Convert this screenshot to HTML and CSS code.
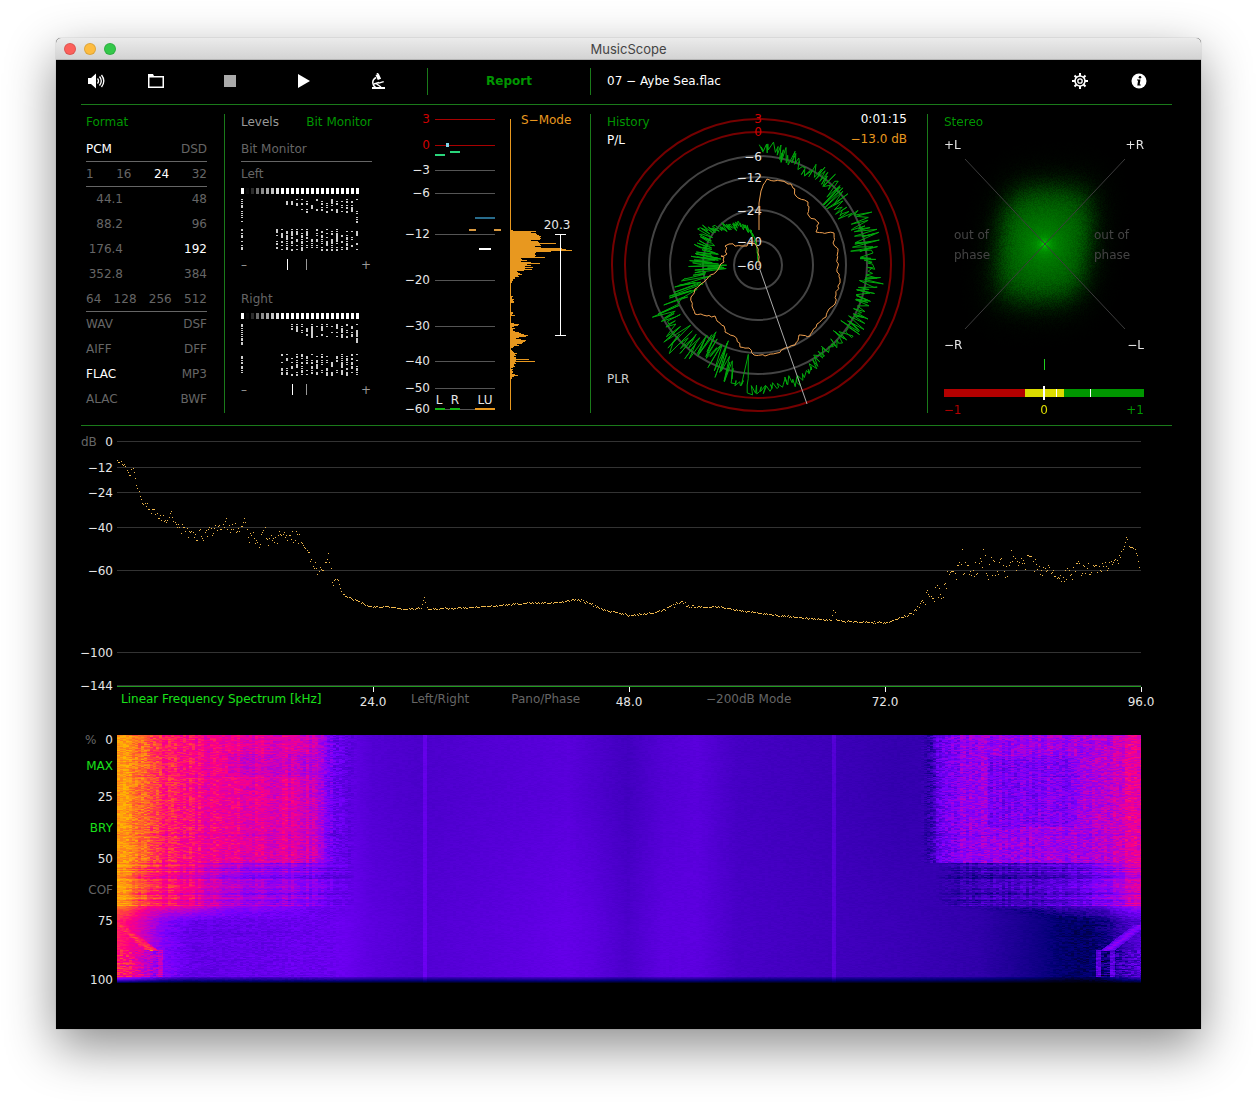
FILE: index.html
```html
<!DOCTYPE html>
<html lang="en">

<head>
    <meta charset="utf-8">
    <title>MusicScope</title>
    <link rel="stylesheet" href="styles.css">
</head>

<body>
    <div class="window">
        <header class="titlebar">
            <div class="lights">
                <button class="light close" aria-label="Close"></button>
                <button class="light minimize" aria-label="Minimize"></button>
                <button class="light zoom" aria-label="Zoom"></button>
            </div>
            <h1>MusicScope</h1>
        </header>

        <main class="content">
            <div class="toolbar">
                <div class="transport">
                    <button aria-label="Volume">
                        <svg width="18" height="16" viewBox="0 0 18 16">
                            <path d="M0 5h3l5-4.500v15L3 11H0z" fill="#fff" />
                            <path d="M9.500 5.500q2 2.500 0 5M11.500 3.500q3.600 4.500 0 9M13.500 2q4.600 6 0 12" fill="none" stroke="#fff" stroke-width="1.300" />
                        </svg>
                    </button>
                    <button aria-label="Open">
                        <svg width="16" height="16" viewBox="0 0 16 16">
                            <path d="M0 1h5l1 2h10v12H0zM1.500 4.500v9h13v-9z" fill="#fff" fill-rule="evenodd" />
                        </svg>
                    </button>
                    <button aria-label="Stop">
                        <svg width="16" height="16" viewBox="0 0 16 16">
                            <rect x="2" y="2" width="12" height="12" fill="#aaa" />
                        </svg>
                    </button>
                    <button aria-label="Play">
                        <svg width="16" height="16" viewBox="0 0 16 16">
                            <path d="M2 1l12 7-12 7z" fill="#fff" />
                        </svg>
                    </button>
                    <button aria-label="Analyze">
                        <svg width="16" height="16" viewBox="0 0 16 16">
                            <path d="M5.500 2l3.300-1.200 2.300 5-3.300 1.300zM6.500 0l1.500-.5.5 1.200-1.500.5zM2 14h13v2H2zM8.500 9.500l5-1.500.4 1.300-5 1.500z" fill="#fff" />
                            <path d="M6 4.500Q2.500 6.500 2.800 10q0 2.500 3 4.500M6 10.500l5 3.500M4 11l5-1.500" fill="none" stroke="#fff" stroke-width="1.500" />
                        </svg>
                    </button>
                </div>
                <button class="report">Report</button>
                <div class="track">
                    <span>07 − Aybe Sea.flac</span>
                    <button class="settings" aria-label="Settings">
                        <svg width="16" height="16" viewBox="-8 -8 16 16">
                            <circle r="5" fill="none" stroke="#fff" stroke-width="1.600" />
                            <circle r="2.200" fill="none" stroke="#fff" stroke-width="1.300" />
                            <path d="M0-8v3M0 8V5M-8 0h3M8 0H5M-5.500-5.500l2 2M5.500 5.500l-2-2M5.500-5.500l-2 2M-5.500 5.500l2-2" stroke="#fff" stroke-width="2" />
                        </svg>
                    </button>
                    <button aria-label="Info">
                        <svg width="16" height="16" viewBox="0 0 16 16">
                            <circle cx="8" cy="8" r="7.500" fill="#fff" />
                            <circle cx="9" cy="4.200" r="1.300" />
                            <path d="M6 6.500h3.500L8.700 11.500h1V12.500H6.300L7.100 7.500H6z" />
                        </svg>
                    </button>
                </div>
            </div>

            <div class="panels">
                <section class="panel format">
                    <h2>Format</h2>
                    <ul>
                        <li class="line"><b>PCM</b><span>DSD</span></li>
                        <li class="line"><span>1</span><span>16</span><b>24</b><span>32</span></li>
                        <li><span class="rate">44.1</span><span>48</span></li>
                        <li><span class="rate">88.2</span><span>96</span></li>
                        <li><span class="rate">176.4</span><b>192</b></li>
                        <li><span class="rate">352.8</span><span>384</span></li>
                        <li class="line"><span>64</span><span>128</span><span>256</span><span>512</span></li>
                        <li><span>WAV</span><span>DSF</span></li>
                        <li><span>AIFF</span><span>DFF</span></li>
                        <li><b>FLAC</b><span>MP3</span></li>
                        <li><span>ALAC</span><span>BWF</span></li>
                    </ul>
                </section>

                <section class="panel levels">
                    <div class="bits">
                        <div class="tabs">
                            <button>Levels</button>
                            <button class="active">Bit Monitor</button>
                        </div>
                        <h3 class="line">Bit Monitor</h3>
                        <h3>Left</h3>
                        <svg class="bitmap" width="131" height="100" viewBox="0 0 131 100" data-seed="7" data-first="9">
                            <path d="M46.500 72v11" stroke="#fff" />
                            <path d="M65.500 72v11" stroke="#999" />
                            <text x="0" y="82">–</text>
                            <text x="130" y="82" class="end">+</text>
                        </svg>
                        <h3>Right</h3>
                        <svg class="bitmap" width="131" height="100" viewBox="0 0 131 100" data-seed="23" data-first="10">
                            <path d="M51.500 72v11" stroke="#fff" />
                            <path d="M65.500 72v11" stroke="#999" />
                            <text x="0" y="82">–</text>
                            <text x="130" y="82" class="end">+</text>
                        </svg>
                    </div>
                    <svg class="meter" width="190" height="299" viewBox="400 114 190 299">
                        <g id="meterScale"></g>
                        <path d="M435 155h10M450 152h10" stroke="#2ad57b" stroke-width="2" />
                        <rect x="446" y="143" width="3" height="4" fill="#7fd4e8" />
                        <path d="M475 218h20" stroke="#286c8c" stroke-width="2" />
                        <path d="M469 230h7M494 230h7" stroke="#d9993f" stroke-width="2" />
                        <path d="M479 249h12" stroke="#fff" stroke-width="2" />
                        <path d="M435 409h10M450 409h10" stroke="#14b414" stroke-width="2" />
                        <path d="M475 409h20" stroke="#e8981f" stroke-width="2" />
                        <text x="439" y="404" class="mid">L</text>
                        <text x="455" y="404" class="mid">R</text>
                        <text x="485" y="404" class="mid">LU</text>
                        <path d="M510.500 119v291" stroke="#e8981f" />
                        <path id="histogram" stroke="#e8981f" />
                        <path d="M560.500 234v101M555 234.500h11M555 335.500h11" stroke="#fff" />
                        <text x="521" y="124" class="orange">S−Mode</text>
                        <text x="557" y="229" class="mid">20.3</text>
                    </svg>
                </section>

                <section class="panel history">
                    <svg width="300" height="299" viewBox="-151 -151 300 299">
                        <g fill="none" stroke="#444" stroke-width="2">
                            <circle r="24" />
                            <circle r="55" />
                            <circle r="88" />
                            <circle r="109" />
                            <circle r="133" stroke="#750000" />
                            <circle r="146" stroke="#750000" />
                        </g>
                        <g class="end">
                            <text x="4" y="-142" class="red">3</text>
                            <text x="4" y="-129" class="red">0</text>
                            <text x="4" y="-104">−6</text>
                            <text x="4" y="-83">−12</text>
                            <text x="4" y="-50">−24</text>
                            <text x="4" y="-19">−40</text>
                            <text x="4" y="5">−60</text>
                        </g>
                        <path id="peakTrace" fill="none" stroke="#00a80c" />
                        <path id="loudTrace" fill="none" stroke="#f0a050" />
                        <path d="M1 2L49 139" stroke="#aaa" />
                    </svg>
                    <h2>History</h2>
                    <div class="clock"><span>0:01:15</span><span class="orange">−13.0 dB</span></div>
                    <span class="pl">P/L</span>
                    <span class="plr">PLR</span>
                </section>

                <section class="panel stereo">
                    <canvas id="cloud" width="200" height="299"></canvas>
                    <svg width="200" height="299" viewBox="0 0 200 299">
                        <path d="M21 45l160 170M181 45L21 215" stroke="#3c3c3c" />
                        <text x="0" y="35">+L</text>
                        <text x="200" y="35" class="end">+R</text>
                        <text x="0" y="235">−R</text>
                        <text x="200" y="235" class="end">−L</text>
                        <g class="phase">
                            <text x="10" y="125">out of</text>
                            <text x="10" y="145">phase</text>
                            <text x="150" y="125">out of</text>
                            <text x="150" y="145">phase</text>
                        </g>
                        <path d="M100.500 245v11" stroke="#1fd21f" />
                        <rect x="0" y="275" width="81" height="8" fill="#b40000" />
                        <rect x="81" y="275" width="39" height="8" fill="#dcdc00" />
                        <rect x="120" y="275" width="80" height="8" fill="#009600" />
                        <path d="M112.500 275v8M146.500 275v8" stroke="#fff" />
                        <path d="M100 272v14" stroke="#fff" stroke-width="2" />
                        <text x="0" y="300" class="neg">−1</text>
                        <text x="100" y="300" class="zero">0</text>
                        <text x="200" y="300" class="pos">+1</text>
                    </svg>
                    <h2>Stereo</h2>
                </section>
            </div>

            <section class="spectrum">
                <svg class="axis" width="36" height="261">
                    <text x="0" y="20" class="dim">dB</text>
                    <g class="end">
                        <text x="32" y="20">0</text>
                        <text x="32" y="46">−12</text>
                        <text x="32" y="71">−24</text>
                        <text x="32" y="106">−40</text>
                        <text x="32" y="149">−60</text>
                        <text x="32" y="231">−100</text>
                        <text x="32" y="264">−144</text>
                    </g>
                </svg>
                <canvas id="spectrum" height="261"></canvas>
                <div class="frequencies">
                    <svg width="100%" height="42">
                        <g fill="#fff">
                            <rect x="25%" y="0" width="1" height="5" />
                            <rect x="50%" y="0" width="1" height="5" />
                            <rect x="75%" y="0" width="1" height="5" />
                            <rect x="100%" y="0" width="1" height="5" />
                        </g>
                        <g class="mid">
                            <text x="25%" y="19">24.0</text>
                            <text x="50%" y="19">48.0</text>
                            <text x="75%" y="19">72.0</text>
                            <text x="100%" y="19">96.0</text>
                        </g>
                    </svg>
                    <nav>
                        <button class="on">Linear Frequency Spectrum [kHz]</button>
                        <div class="modes"><button>Left/Right</button><button>Pano/Phase</button></div>
                        <button class="wide">−200dB Mode</button>
                    </nav>
                </div>
            </section>

            <section class="spectrogram">
                <div class="progress">
                    <div class="first"><span class="dim">%</span><span>0</span></div>
                    <button class="on">MAX</button>
                    <span>25</span>
                    <button class="on">BRY</button>
                    <span>50</span>
                    <button>COF</button>
                    <span>75</span>
                    <span class="last">100</span>
                </div>
                <canvas id="spectrogram" height="248"></canvas>
            </section>
        </main>
    </div>

    <script src="script.js"></script>
</body>

</html>
```

FILE: styles.css
```css
* {
    box-sizing: border-box;
}

body {
    margin: 0;
    padding: 38px 56px 74px;
    background: #fff;
    color: #fff;
    font: 12px/16px "DejaVu Sans", sans-serif;
}

h1, h2, h3, ul {
    margin: 0;
    padding: 0;
    font-size: 12px;
    font-weight: normal;
}

svg, canvas {
    display: block;
}

text {
    fill: #e6e6e6;
}

button {
    padding: 0;
    border: 0;
    background: none;
    color: #666;
    font: inherit;
    cursor: pointer;
}

.window {
    background: #000;
    border-radius: 5px 5px 0 0;
    box-shadow: 0 0 1px rgba(0, 0, 0, .5), 0 18px 50px rgba(0, 0, 0, .45);
}

.titlebar {
    display: grid;
    grid-template-columns: 1fr auto 1fr;
    align-items: center;
    height: 22px;
    padding: 0 8px;
    border-radius: 5px 5px 0 0;
    border-bottom: 1px solid #b4b4b4;
    background: linear-gradient(#ebebeb, #d3d3d3);
}

.titlebar h1 {
    color: #444;
    font: 13px/20px Inter, sans-serif;
}

.lights {
    display: flex;
    gap: 8px;
}

.light {
    width: 12px;
    height: 12px;
    border-radius: 50%;
    border: 1px solid rgba(0, 0, 0, .12);
}

.close { background: #fc605b; }
.minimize { background: #fdbc40; }
.zoom { background: #34c84a; }

.content {
    padding: 0 29px 46px 25px;
}

/* toolbar */
.toolbar {
    display: grid;
    grid-template-columns: 347fr 163fr 581fr;
    align-items: center;
    height: 45px;
    padding-bottom: 2px;
    border-bottom: 1px solid #1a7a1a;
}

.transport {
    display: grid;
    grid-template-columns: 60px 74px 74px 74px 16px;
    align-items: center;
    justify-items: start;
    height: 27px;
    padding-left: 7px;
    border-right: 1px solid #1a7a1a;
}

.report {
    height: 27px;
    border-right: 1px solid #1a7a1a;
    color: #009600;
    font-weight: bold;
}

.track {
    display: flex;
    align-items: center;
    gap: 43px;
    padding: 0 25px 0 16px;
}

.track .settings {
    margin-left: auto;
}

/* upper panels */
.panels {
    display: grid;
    grid-template-columns: 144fr 366fr 337fr 244fr;
    padding: 9px 0 12px;
    border-bottom: 1px solid #1a7a1a;
}

.panel {
    border-right: 1px solid #1a7a1a;
}

.panel h2 {
    color: #009600;
}

.format {
    padding: 0 17px 0 5px;
}

.format h2 {
    margin-bottom: 7px;
}

.format li {
    display: flex;
    justify-content: space-between;
    height: 25px;
    line-height: 24px;
    color: #666;
}

.format b {
    color: #fff;
    font-weight: normal;
}

.format .rate {
    width: 37px;
    text-align: right;
}

.line {
    border-bottom: 1px solid #666;
}

.levels {
    display: flex;
    justify-content: space-between;
    padding-left: 16px;
}

.bits {
    width: 131px;
}

.bits h3 {
    height: 25px;
    line-height: 24px;
    color: #666;
}

.tabs {
    display: flex;
    justify-content: space-between;
    height: 23px;
    align-items: flex-start;
}

.tabs button {
    color: #999;
}

.tabs .active {
    color: #009600;
}

.bitmap text {
    fill: #999;
}

.meter {
    overflow: visible;
}

.history {
    display: grid;
    grid-template: 16px 18px 1fr 18px / 1fr auto;
    padding: 0 20px 0 16px;
}

.history svg {
    grid-area: 1 / 1 / 5 / 3;
    justify-self: center;
}

.history h2 {
    grid-area: 1 / 1;
}

.clock {
    grid-area: 1 / 2 / 3 / 3;
    display: grid;
    align-content: start;
    gap: 10px;
    line-height: 10px;
    text-align: right;
    white-space: nowrap;
}

.pl {
    grid-area: 2 / 1;
    line-height: 20px;
}

.plr {
    grid-area: 4 / 1;
    margin-bottom: 26px;
    align-self: end;
    color: #ccc;
}

.stereo {
    display: grid;
    justify-content: center;
    padding-right: 12px;
    border: 0;
}

.stereo > * {
    grid-area: 1 / 1;
}

.stereo svg {
    overflow: visible;
}

.phase text {
    fill: #444;
}

.orange { fill: #e8981f; color: #e8981f; }
.red { fill: #d00000; }
.dim { fill: #666; color: #666; }
.grey { fill: #e6e6e6; }
.neg { fill: #b40000; }
.zero { fill: #dcdc00; text-anchor: middle; }
.pos { fill: #009600; text-anchor: end; }
.end { text-anchor: end; }
.mid { text-anchor: middle; }

/* lower charts */
.spectrum {
    display: grid;
    grid-template-columns: 36px 1fr;
    padding-right: 31px;
}

.spectrum canvas, .spectrogram canvas {
    width: 100%;
    min-width: 0;
}

.axis {
    overflow: visible;
}

.frequencies {
    grid-column: 2;
    display: grid;
}

.frequencies > * {
    grid-area: 1 / 1;
}

.frequencies svg {
    overflow: visible;
}

.frequencies nav {
    display: grid;
    grid-template-columns: repeat(4, 1fr);
    align-items: start;
    justify-items: start;
    padding-top: 4px;
    white-space: nowrap;
}

.frequencies .on {
    margin-left: 4px;
}

.modes {
    display: flex;
    gap: 42px;
    margin-left: 38px;
}

.wide {
    margin-left: 77px;
}

.on {
    color: #1ae01a;
}

.spectrogram {
    display: grid;
    grid-template-columns: 36px 1fr;
    padding-right: 31px;
}

.spectrogram canvas {
    margin-top: 6px;
}

.progress {
    display: flex;
    flex-direction: column;
    padding-right: 4px;
    line-height: 31px;
    text-align: right;
    color: #e6e6e6;
}

.progress button {
    text-align: right;
}

.progress .first {
    display: flex;
    justify-content: space-between;
    padding-left: 4px;
    line-height: 22px;
}

.progress .last {
    margin-top: auto;
    line-height: 6px;
}
```

FILE: script.js
```javascript
// small seeded generator, so every load draws the same signal
function random(seed) {
    return function () {
        seed = (seed * 1664525 + 1013904223) % 4294967296;
        return seed / 4294967296;
    };
}

// linear interpolation of column `k` in rows sorted by their first value
function lerp(rows, x, k) {
    if (x <= rows[0][0]) return rows[0][k];
    for (var i = 1; i < rows.length; i++) {
        if (x <= rows[i][0]) {
            var a = rows[i - 1], b = rows[i];
            return a[k] + (b[k] - a[k]) * (x - a[0]) / (b[0] - a[0]);
        }
    }
    return rows[rows.length - 1][k];
}

function drawBits(svg) {
    var rnd = random(Number(svg.dataset.seed));
    var first = Number(svg.dataset.first);
    var head = [255, 12, 45, 110, 140, 170, 195, 230];
    var out = '';
    for (var c = 0; c < 24; c++) {
        var g = c < head.length ? head[c] : 255;
        out += '<rect x="' + c * 5 + '" y="1" width="3" height="6" fill="rgb(' + g + ',' + g + ',' + g + ')"/>';
        for (var r = 0; r < 26; r++) {
            var upper = r < 11, lower = r >= 15;
            var edge = c === 0 || c === 23;
            var show = 0;
            if (c === 0) show = r < 12 ? 0.8 : (lower ? 0.65 : 0);
            else if (upper && c >= first) show = r < 3 + (c - first) * 0.9 && r < 7 ? 0.6 : 0;
            else if (lower && c >= first - 2) show = 0.65;
            if (edge && r < 12) show = Math.max(show, 0.8);
            if (rnd() < show) {
                var tall = rnd() < 0.45 ? 2 : 1;
                out += '<rect x="' + c * 5 + '" y="' + (12 + r * 2) + '" width="2" height="' + tall + '" fill="#ccc"/>';
            }
        }
    }
    svg.insertAdjacentHTML('afterbegin', out);
}

function drawMeter() {
    var marks = [['3', 119], ['0', 145], ['−3', 170], ['−6', 193], ['−12', 234], ['−20', 280],
        ['−30', 326], ['−40', 361], ['−50', 388], ['−60', 409]];
    var out = '';
    marks.forEach(function (m, i) {
        var red = i < 2;
        out += '<path d="M435 ' + (m[1] + 0.5) + 'h60" stroke="' + (red ? '#a80000' : '#555') + '"/>';
        out += '<text x="430" y="' + (m[1] + 4) + '" class="end ' + (red ? 'red' : 'grey') + '">' + m[0] + '</text>';
    });
    document.getElementById('meterScale').innerHTML = out;

    var bars = {
        230: [2, 25, 20, 25, 26, 28, 30, 29, 30, 29, 20, 27, 28, 45, 29, 30, 24, 30, 51, 55, 61, 40, 25, 24, 24, 25, 24,
            34, 10, 11, 16, 10, 20, 29, 16, 20, 14, 22, 14, 21, 13, 6, 7, 9, 11, 7, 8, 4, 4, 2, 2, 1, 1],
        296: [2, 1, 1, 3, 2, 3, 3],
        312: [2, 2, 1, 4],
        323: [3, 8, 7, 3, 1, 4, 2, 2, 4, 8, 10, 13, 17, 15, 8, 5, 10, 15, 14, 12, 11, 6, 8, 3, 2],
        350: [1, 2, 3, 6, 4, 5, 3, 5, 5, 18, 5, 24, 4, 5, 3, 3, 4, 2],
        369: [2, 1, 2, 2, 1, 4, 7, 3, 1, 1]
    };
    var d = '';
    Object.keys(bars).forEach(function (y) {
        bars[y].forEach(function (w, i) {
            d += 'M511 ' + (Number(y) + i + 0.5) + 'h' + w;
        });
    });
    document.getElementById('histogram').setAttribute('d', d);
}

function drawHistory() {
    // angle, inner radius, outer radius
    var peak = [[1, 108, 122], [8, 112, 125], [13, 100, 122], [20, 108, 122], [26, 96, 110], [34, 101, 120], [40, 90, 124],
        [46, 88, 114], [50, 86, 120], [56, 88, 108], [60, 92, 108], [61, 78, 122], [62, 98, 127], [70, 96, 125], [80, 93, 129], [84, 92, 122],
        [90, 104, 120], [97, 101, 128], [102, 98, 125], [110, 103, 120], [120, 100, 128], [130, 98, 123],
        [140, 100, 119], [150, 105, 121], [160, 113, 129], [170, 116, 125], [180, 118, 132], [185, 117, 131],
        [186, 76, 120], [187, 116, 125], [191, 116, 124], [193, 102, 121], [197, 82, 123], [205, 80, 118], [212, 76, 114],
        [217, 86, 120], [225, 88, 127], [235, 91, 121], [240, 92, 112], [243, 82, 125], [250, 58, 97], [260, 38, 79],
        [268, 18, 74], [275, 36, 69], [285, 40, 68], [295, 46, 69], [303, 55, 73], [312, 47, 59], [325, 41, 53],
        [335, 37, 50], [345, 33, 42], [352, 25, 33], [356, 10, 18], [359, 2, 5]];
    var rnd = random(11);
    var d = '';
    var side = 0;
    for (var a = 1; a < 360; a += 0.75) {
        side = rnd() < 0.88 ? 1 - side : side;
        var lo = lerp(peak, a, 1), hi = lerp(peak, a, 2);
        var part = rnd() * 0.45;
        var r = side ? hi - (hi - lo) * part : lo + (hi - lo) * part;
        var t = (a + (rnd() - 0.5) * 2.4) * Math.PI / 180;
        d += (d ? 'L' : 'M') + (Math.sin(t) * r).toFixed(1) + ' ' + (-Math.cos(t) * r).toFixed(1);
    }
    document.getElementById('peakTrace').setAttribute('d', d);

    var loud = [[1, -35], [1, -62], [3, -74], [9, -86], [16, -84], [24, -84], [33, -81], [38, -69], [50, -63], [51, -49], [61, -42],
        [58, -33], [76, -32], [75, -22], [80, -16], [79, 7], [82, 14], [78, 30], [77, 39], [71, 44], [68, 52], [59, 59],
        [52, 71], [41, 70], [37, 80], [27, 83], [19, 88], [7, 91], [-4, 90], [-9, 83], [-18, 82], [-24, 71], [-33, 67],
        [-34, 61], [-41, 56], [-43, 51], [-51, 51], [-63, 49], [-66, 41], [-67, 32], [-63, 24], [-54, 17], [-42, 7],
        [-34, -3], [-34, -8], [-37, -9], [-31, -11], [-33, -19], [-29, -21], [-16, -19], [-11, -19], [-8, -24], [-1, -18], [1, 1]];
    d = 'M1 -35';
    for (var i = 1; i < loud.length; i++) {
        var p = loud[i - 1], q = loud[i];
        var n = Math.max(1, Math.round(Math.hypot(q[0] - p[0], q[1] - p[1]) / 3));
        for (var k = 1; k <= n; k++) {
            var wob = i < 3 || k === n ? 0 : 2.4;
            d += 'L' + (p[0] + (q[0] - p[0]) * k / n + (rnd() - 0.5) * wob).toFixed(1) +
                ' ' + (p[1] + (q[1] - p[1]) * k / n + (rnd() - 0.5) * wob).toFixed(1);
        }
    }
    document.getElementById('loudTrace').setAttribute('d', d);
}

function drawCloud() {
    var ctx = document.getElementById('cloud').getContext('2d');
    var img = ctx.createImageData(200, 299);
    var rnd = random(5);
    for (var y = 0; y < 299; y++) {
        for (var x = 0; x < 200; x++) {
            var dx = x - 100, dy = y - 130;
            var sx = (dx + dy * 0.1) / 53, sy = dy / 66;
            var d = Math.pow(Math.pow(Math.abs(sx), 3) + Math.pow(Math.abs(sy), 3), 1 / 3);
            var edge = 1 / (1 + Math.exp((d - 0.86) * 8));
            var g = edge * (85 + 55 * Math.exp(-Math.hypot(dx, dy) / 35)) + 80 * Math.exp(-Math.hypot(dx, dy) / 4);
            g *= 1 + (rnd() - 0.5) * Math.min(1.4, 0.08 + d * d * d * 0.6);
            var p = (y * 200 + x) * 4;
            img.data[p + 1] = g;
            img.data[p + 3] = 255;
        }
    }
    ctx.putImageData(img, 0, 0);
}

function drawSpectrum() {
    var canvas = document.getElementById('spectrum');
    var w = canvas.width = canvas.clientWidth;
    var ctx = canvas.getContext('2d');
    ctx.fillStyle = '#333';
    [15, 41, 66, 101, 144, 226, 259].forEach(function (y) {
        ctx.fillRect(0, y, w, 1);
    });
    ctx.fillStyle = '#1f9a1f';
    ctx.fillRect(0, 260, w, 1);

    // position out of 1024, level, spread
    var curve = [[0, 35, 2], [7, 38, 2], [13, 47, 3], [16, 42, 2], [20, 62, 3], [26, 75, 3], [38, 88, 5], [48, 95, 4],
        [54, 88, 4], [58, 98, 4], [68, 104, 8], [83, 110, 6], [98, 105, 5], [106, 100, 4], [108, 93, 4], [112, 107, 8],
        [122, 102, 7], [126, 96, 3], [130, 108, 7], [143, 116, 7], [147, 100, 3], [150, 118, 7], [158, 108, 8], [170, 117, 7],
        [178, 112, 9], [188, 124, 5], [201, 146, 7], [207, 142, 7], [211, 126, 3], [215, 155, 5], [220, 154, 2], [226, 168, 2],
        [238, 174, 1], [255, 181, 1], [268, 180, 1], [285, 183, 1], [304, 182, 1], [307, 170, 1], [310, 183, 1],
        [340, 182, 1], [370, 180, 1], [410, 177, 1], [440, 176, 1], [460, 174, 2], [470, 176, 2], [488, 184, 1],
        [512, 189, 1], [535, 187, 1], [548, 183, 2], [563, 177, 2], [580, 180, 2], [605, 181, 1], [640, 187, 1], [680, 191, 1],
        [714, 194, 1], [717, 182, 1], [719, 194, 1], [740, 196, 1], [770, 196, 1], [785, 191, 1], [795, 187, 2],
        [801, 182, 3], [805, 174, 3], [813, 166, 13], [825, 160, 13], [838, 148, 10], [850, 140, 10], [860, 140, 10], [873, 141, 10],
        [888, 144, 9], [898, 138, 9], [908, 133, 9], [918, 140, 9], [933, 143, 5], [943, 151, 5], [958, 145, 9],
        [983, 142, 5], [1000, 134, 5], [1006, 124, 2], [1009, 110, 2], [1012, 121, 2], [1017, 122, 1], [1020, 130, 2], [1024, 151, 2]];
    var rnd = random(99);
    var drift = 0;
    ctx.fillStyle = '#f0b84c';
    for (var i = 0; i < 1024; i += 1.2) {
        var spread = lerp(curve, i, 2);
        drift = drift * 0.2 + (rnd() - 0.5) * 2;
        if (rnd() < 0.05) drift -= 1;
        if (spread < 2) drift *= 0.7;
        ctx.fillRect(Math.round(i * w / 1024), Math.round(lerp(curve, i, 1) + drift * spread), 1, 1);
    }
}

var palette = [[0, 0, 0, 0], [0.12, 0, 0, 115], [0.25, 52, 0, 175], [0.35, 85, 0, 215], [0.45, 120, 0, 255],
    [0.55, 165, 0, 225], [0.65, 215, 0, 175], [0.75, 255, 0, 128], [0.87, 255, 80, 50], [1, 255, 185, 0]];

function drawSpectrogram() {
    var canvas = document.getElementById('spectrogram');
    var w = canvas.width = canvas.clientWidth;
    var h = canvas.height;
    var ctx = canvas.getContext('2d');
    var img = ctx.createImageData(w, h);
    var rnd = random(42);

    // noise floor: upper part, lower part
    var floor = [[0, 0.42, 0.38], [180, 0.43, 0.4], [220, 0.41, 0.42], [255, 0.34, 0.37], [300, 0.32, 0.34], [370, 0.34, 0.36],
        [450, 0.36, 0.39], [475, 0.33, 0.37], [510, 0.29, 0.32], [545, 0.34, 0.37], [580, 0.36, 0.37], [620, 0.3, 0.31], [700, 0.28, 0.29],
        [780, 0.25, 0.27], [860, 0.26, 0.24], [900, 0.26, 0.19], [940, 0.27, 0.13], [1024, 0.27, 0.1]];
    // music: loud part, middle part, intro
    var music = [[0, 0.97, 0.97, 0.8], [10, 0.97, 0.95, 0.75], [20, 0.92, 0.88, 0.68], [30, 0.86, 0.8, 0.6], [48, 0.79, 0.75, 0.46], [75, 0.75, 0.7, 0.39],
        [110, 0.7, 0.55, 0.39], [180, 0.67, 0.49, 0.4], [198, 0.61, 0.45, 0.4], [212, 0.46, 0.42, 0.4], [230, 0.36, 0.36, 0.3],
        [260, 0.1, 0.1, 0.1], [780, 0, 0, 0], [808, 0.2, 0.12, 0], [824, 0.42, 0.18, 0], [850, 0.51, 0.25, 0],
        [920, 0.53, 0.3, 0.05], [970, 0.54, 0.38, 0.1], [990, 0.58, 0.46, 0.16], [1008, 0.67, 0.58, 0.28], [1024, 0.68, 0.64, 0.34]];

    var columns = [];
    for (var x = 0; x < w; x++) columns.push(x % 3 ? columns[x - 1] : (rnd() - 0.5) * 0.07);

    for (var y = 0; y < h; y++) {
        var part = y < 128 ? 1 : (y < 171 ? 2 : 3);
        var row = (rnd() - 0.5) * (part === 2 ? 0.16 : 0.03);
        if (y === 99 || y === 100 || y === 41) row = -0.05;
        var grain = 0;
        for (x = 0; x < w; x++) {
            var u = x * 1024 / w;
            if (x % 3 === 0) grain = rnd() - 0.5;
            var t = Math.min(1, Math.max(0, (y - 60) / 130));
            var base = lerp(floor, u, 1) * (1 - t) + lerp(floor, u, 2) * t;
            // pilot tones
            if (Math.abs(u - 307.5) < 2 || Math.abs(u - 716.5) < 2) base += 0.07;
            var m = lerp(music, u, part);
            if (part === 3 && y < 186) {
                var k = (186 - y) / 15 * (u < 512 ? 1 : 0.8);
                m = m * (1 - k) + lerp(music, u, 2) * k * 0.94;
            }
            if (part === 1) {
                if (u > 110 && u < 200 && y > 18 && y < 40) m -= 0.05;
                if (u > 870 && u < 960 && y > 20 && y < 92) m -= 0.07;
            }
            // the music fades into the floor instead of cutting it off
            var weight = Math.min(1, Math.max(0, (m - base + 0.1) / 0.12));
            var noisy = part === 3 ? 0.06 : (part === 2 ? 0.08 : 0.12);
            if (u > 780) noisy *= 1.3;
            var calm = Math.min(1, 0.4 + u / 60);
            var sound = Math.max(m, base - 0.03) + grain * noisy * calm + (part < 3 ? columns[x] * calm : 0) + row * calm;
            var v = base + grain * 0.02 + weight * (sound - base);
            // sweep at the start of the track and its mirror image
            var e = u < 512 ? u : 1024 - u;
            if (part === 3) {
                var line = (y - 189) * 1.3;
                var near = Math.abs(e - line) / 7;
                if (y > 189 && y < 216 && e < line && u < 512) v = Math.max(v, 0.7 + grain * 0.1);
                if (y > 189 && y < 216 && near < 1) v = Math.max(v, (u < 512 ? 0.84 : 0.5) - near * 0.12 + grain * 0.1);
                if (y > 214 && y < 242) {
                    var bar = Math.abs(e - 43) < 3 || Math.abs(e - 29) < 3;
                    if (e < 46) v += row * 2 + grain * 0.12;
                    if (bar) v = (u < 512 ? 0.6 : 0.36) + grain * 0.14 + row * 3;
                }
            }
            if (y > h - 7) v *= (h - y) / 8;
            v = Math.min(1, Math.max(0, v));
            var p = (y * w + x) * 4;
            img.data[p] = lerp(palette, v, 1);
            img.data[p + 1] = lerp(palette, v, 2);
            img.data[p + 2] = lerp(palette, v, 3);
            img.data[p + 3] = 255;
        }
    }
    ctx.putImageData(img, 0, 0);
}

function drawWide() {
    drawSpectrum();
    drawSpectrogram();
}

document.querySelectorAll('.bitmap').forEach(drawBits);
drawMeter();
drawHistory();
drawCloud();
drawWide();
window.addEventListener('resize', drawWide);
```
